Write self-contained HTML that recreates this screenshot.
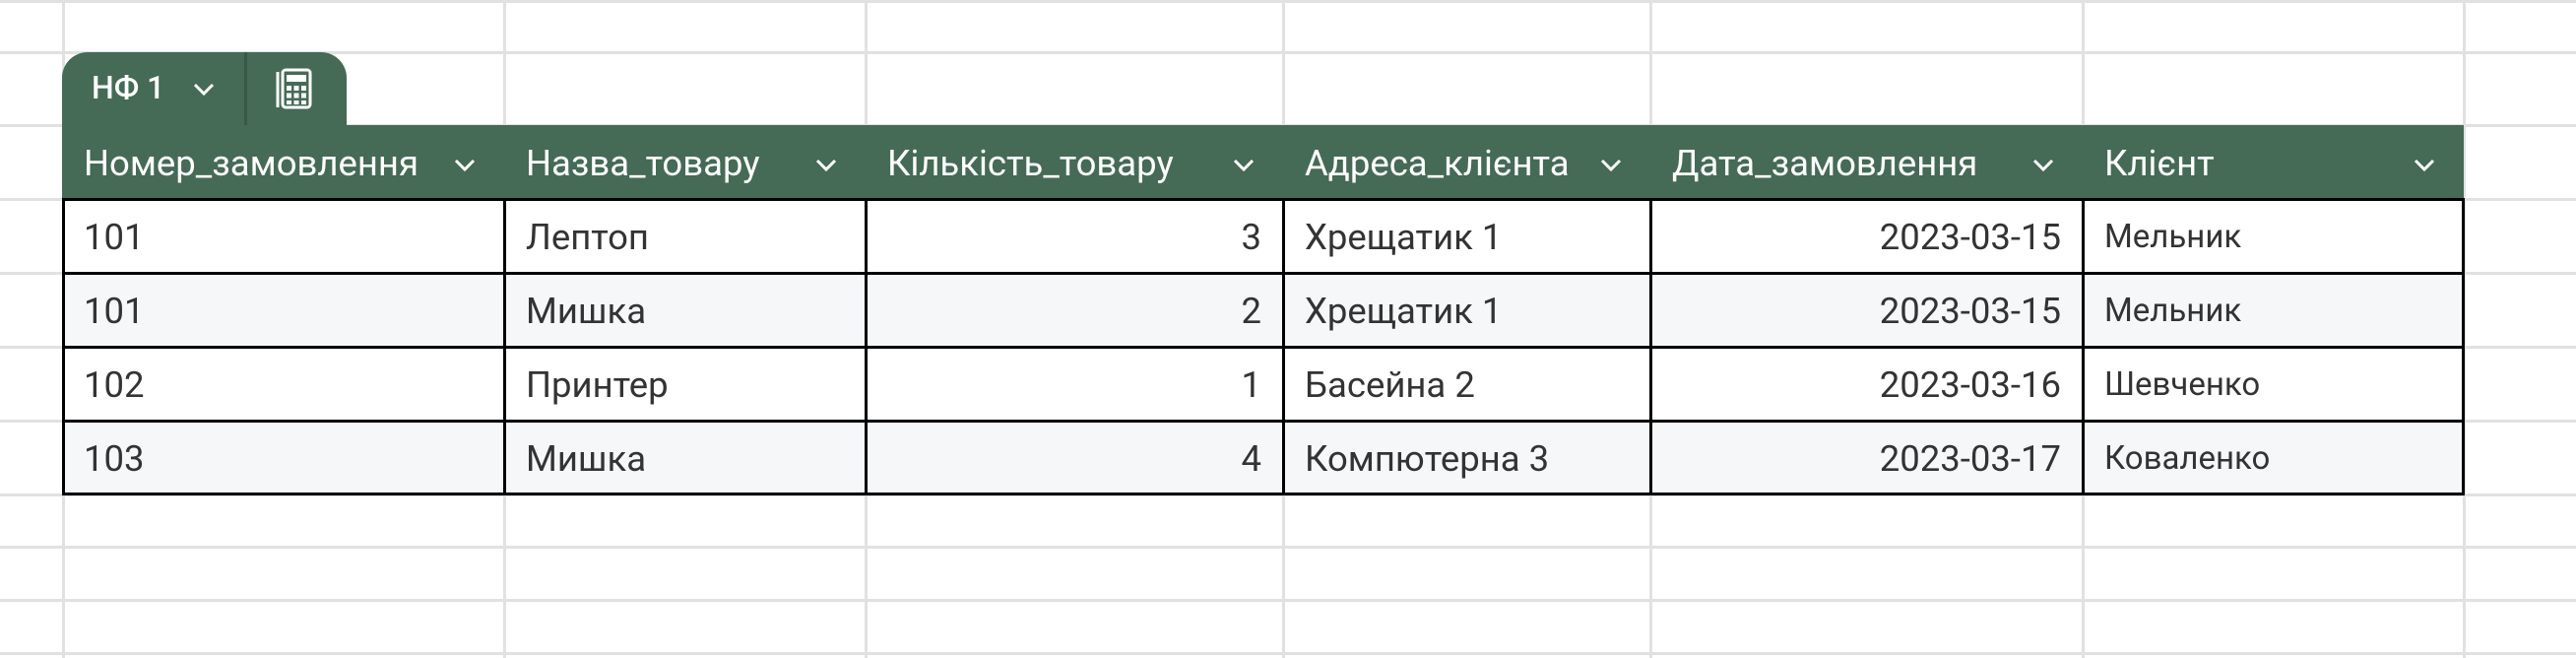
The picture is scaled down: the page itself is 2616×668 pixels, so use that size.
<!DOCTYPE html>
<html><head><meta charset="utf-8"><style>
body{margin:0;width:2616px;height:668px;background:#fff;position:relative;overflow:hidden;font-family:"Roboto","Liberation Sans","Noto Sans CJK SC",sans-serif;}
.v{position:absolute;top:0;height:668px;width:3px;background:#e1e1e1}
.h{position:absolute;left:0;width:2616px;height:3px;background:#e1e1e1}
.tab{position:absolute;left:63px;top:53px;width:289px;height:76px;background:#456a56;border-radius:26px 26px 0 0;color:#fff}
.tab .div{position:absolute;left:185px;top:0;width:3px;height:76px;background:#37574a}
.tab .t{position:absolute;left:30px;top:17px;font-size:32px;font-weight:500;white-space:nowrap}
.hdr{position:absolute;left:63px;top:127px;width:2439px;height:75px;background:#456a56}
.hc{position:absolute;top:127px;height:75px;line-height:78px;color:#fff;font-size:36.5px;padding-left:22px;box-sizing:border-box;white-space:nowrap}
.chev{position:absolute;top:160px}
.row{position:absolute;left:63px;width:2439px;height:75px}
.c{position:absolute;height:75px;line-height:78px;font-size:36.5px;color:#333;box-sizing:border-box;padding:0 22px;white-space:nowrap}
.r{text-align:right}
.bl{position:absolute;background:#000}
</style></head><body>
<div class="v" style="left:63px"></div><div class="v" style="left:511px"></div><div class="v" style="left:878px"></div><div class="v" style="left:1302px"></div><div class="v" style="left:1675px"></div><div class="v" style="left:2114px"></div><div class="v" style="left:2501px"></div>
<div class="h" style="top:0"></div><div class="h" style="top:52px"></div><div class="h" style="top:126px"></div><div class="h" style="top:201px"></div><div class="h" style="top:276px"></div><div class="h" style="top:351px"></div><div class="h" style="top:426px"></div><div class="h" style="top:501px"></div><div class="h" style="top:554px"></div><div class="h" style="top:608px"></div><div class="h" style="top:662px"></div>

<div class="tab"><span class="t">НФ 1</span>
<svg style="position:absolute;left:132px;top:30px" width="24" height="16" viewBox="0 0 24 16"><path d="M3 3l9 9 9-9" stroke="#fff" stroke-width="3" fill="none"/></svg>
<div class="div"></div>
<svg style="position:absolute;left:216px;top:16px" width="42" height="44" viewBox="0 0 42 44"><path d="M3 4v36" stroke="#fff" stroke-width="3"/><rect x="8" y="2" width="28" height="38" rx="3" fill="none" stroke="#fff" stroke-width="3"/><rect x="12" y="7" width="20" height="7" fill="#fff"/><g fill="#fff"><rect x="12" y="18" width="5" height="5"/><rect x="19.5" y="18" width="5" height="5"/><rect x="27" y="18" width="5" height="5"/><rect x="12" y="25.5" width="5" height="5"/><rect x="19.5" y="25.5" width="5" height="5"/><rect x="27" y="25.5" width="5" height="5"/><rect x="12" y="33" width="5" height="4"/><rect x="19.5" y="33" width="5" height="4"/><rect x="27" y="33" width="5" height="4"/></g></svg>
</div>
<div class="hdr"></div>
<div class="hc" style="left:63px">Номер_замовлення</div>
<div class="hc" style="left:512px">Назва_товару</div>
<div class="hc" style="left:879px">Кількість_товару</div>
<div class="hc" style="left:1303px">Адреса_клієнта</div>
<div class="hc" style="left:1676px">Дата_замовлення</div>
<div class="hc" style="left:2115px">Клієнт</div>
<svg class="chev" style="left:460px" width="24" height="16"><path d="M3 3l9 9 9-9" stroke="#fff" stroke-width="3" fill="none"/></svg>
<svg class="chev" style="left:827px" width="24" height="16"><path d="M3 3l9 9 9-9" stroke="#fff" stroke-width="3" fill="none"/></svg>
<svg class="chev" style="left:1251px" width="24" height="16"><path d="M3 3l9 9 9-9" stroke="#fff" stroke-width="3" fill="none"/></svg>
<svg class="chev" style="left:1624px" width="24" height="16"><path d="M3 3l9 9 9-9" stroke="#fff" stroke-width="3" fill="none"/></svg>
<svg class="chev" style="left:2063px" width="24" height="16"><path d="M3 3l9 9 9-9" stroke="#fff" stroke-width="3" fill="none"/></svg>
<svg class="chev" style="left:2450px" width="24" height="16"><path d="M3 3l9 9 9-9" stroke="#fff" stroke-width="3" fill="none"/></svg>

<div class="row" style="top:202px;background:#fff"></div>
<div class="row" style="top:277px;background:#f6f7f9"></div>
<div class="row" style="top:352px;background:#fff"></div>
<div class="row" style="top:427px;background:#f6f7f9"></div>

<div style="position:absolute;left:0;top:202px">
<div class="c" style="left:63px;top:0">101</div><div class="c" style="left:512px;top:0">Лептоп</div><div class="c r" style="left:879px;width:424px;top:0">3</div><div class="c" style="left:1303px;top:0">Хрещатик 1</div><div class="c r" style="left:1676px;width:439px;top:0">2023-03-15</div><div class="c" style="left:2115px;top:0;font-size:33px">Мельник</div>
<div class="c" style="left:63px;top:75px">101</div><div class="c" style="left:512px;top:75px">Мишка</div><div class="c r" style="left:879px;width:424px;top:75px">2</div><div class="c" style="left:1303px;top:75px">Хрещатик 1</div><div class="c r" style="left:1676px;width:439px;top:75px">2023-03-15</div><div class="c" style="left:2115px;top:75px;font-size:33px">Мельник</div>
<div class="c" style="left:63px;top:150px">102</div><div class="c" style="left:512px;top:150px">Принтер</div><div class="c r" style="left:879px;width:424px;top:150px">1</div><div class="c" style="left:1303px;top:150px">Басейна 2</div><div class="c r" style="left:1676px;width:439px;top:150px">2023-03-16</div><div class="c" style="left:2115px;top:150px;font-size:33px">Шевченко</div>
<div class="c" style="left:63px;top:225px">103</div><div class="c" style="left:512px;top:225px">Мишка</div><div class="c r" style="left:879px;width:424px;top:225px">4</div><div class="c" style="left:1303px;top:225px">Компютерна 3</div><div class="c r" style="left:1676px;width:439px;top:225px">2023-03-17</div><div class="c" style="left:2115px;top:225px;font-size:33px">Коваленко</div>
</div>

<div class="bl" style="left:63px;top:201px;width:2440px;height:3px"></div>
<div class="bl" style="left:63px;top:276px;width:2440px;height:3px"></div>
<div class="bl" style="left:63px;top:351px;width:2440px;height:3px"></div>
<div class="bl" style="left:63px;top:426px;width:2440px;height:3px"></div>
<div class="bl" style="left:63px;top:500px;width:2440px;height:3px"></div>
<div class="bl" style="left:63px;top:201px;width:3px;height:302px"></div>
<div class="bl" style="left:511px;top:201px;width:3px;height:302px"></div>
<div class="bl" style="left:878px;top:201px;width:3px;height:302px"></div>
<div class="bl" style="left:1302px;top:201px;width:3px;height:302px"></div>
<div class="bl" style="left:1675px;top:201px;width:3px;height:302px"></div>
<div class="bl" style="left:2114px;top:201px;width:3px;height:302px"></div>
<div class="bl" style="left:2500px;top:201px;width:3px;height:302px"></div>
</body></html>
